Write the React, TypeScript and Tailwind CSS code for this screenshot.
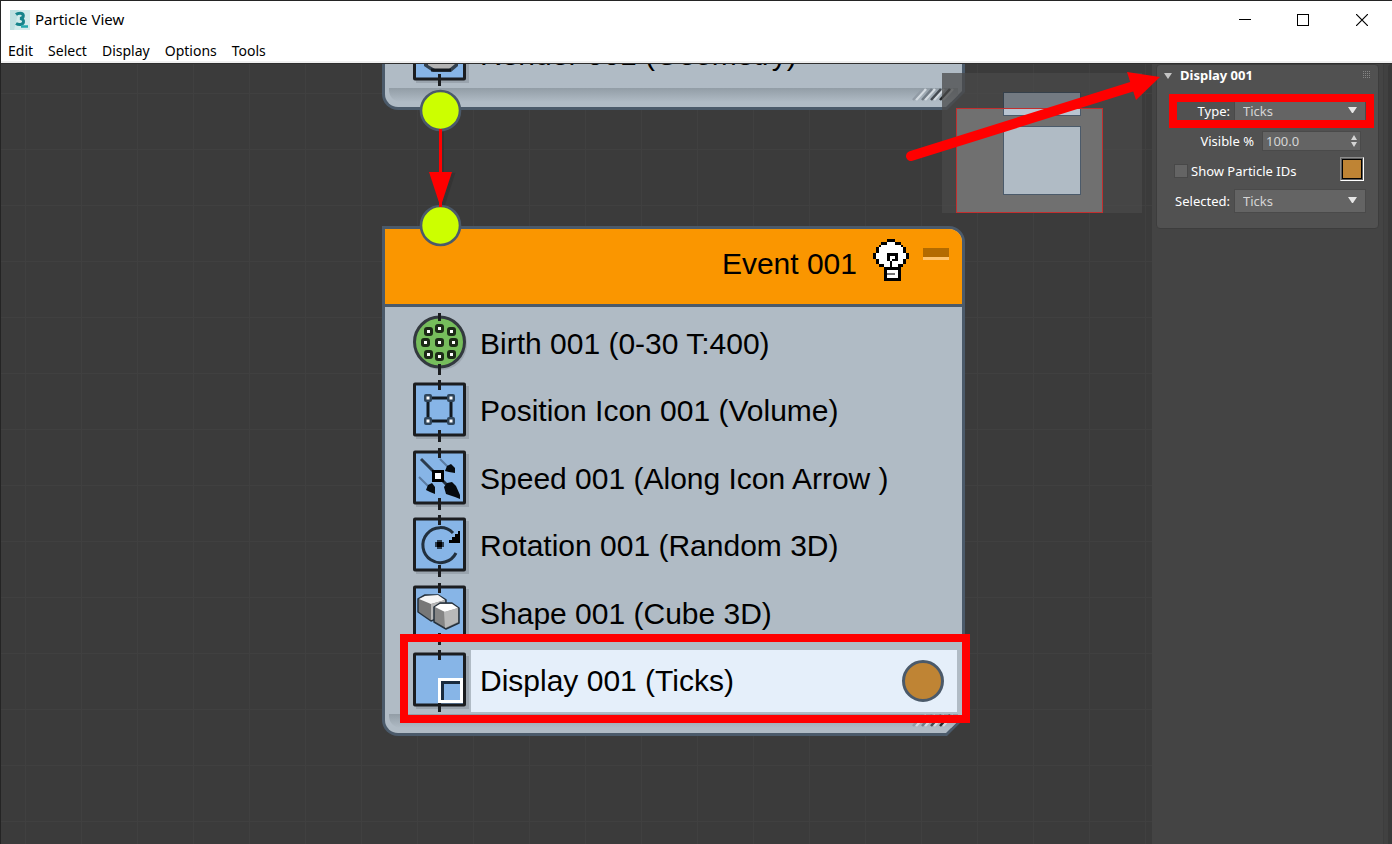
import { useState } from 'react';
import type { ReactNode } from 'react';

const MENUS = ['Edit', 'Select', 'Display', 'Options', 'Tools'];
const DISPLAY_TYPES = ['Ticks', 'Dots', 'Circles', 'Lines', 'Geometry', 'None'];

// k = outline, w = fill, g = shade
const BULB = [
  '.....kkk.....',
  '...kkwwwkk...',
  '..kwwwwwwwk..',
  '.kwwwwwwwwwk.',
  '.kwwwwwwwwwk.',
  'kwwwwkkkkwwwk',
  'kwwwwkwwkwwwk',
  '.kwwwkwkkwwk.',
  '.kwwwwkwwwwk.',
  '..kkwwkwwkk..',
  '....kkkkkk...',
  '....kwwwwk...',
  '....kgggwk...',
  '....kwwwwk...',
  '....kkkkkk...',
];

const PIXEL_COLORS: Record<string, string> = { k: '#000', w: '#fff', g: '#777' };

function BulbIcon() {
  return (
    <svg width="36" height="42" viewBox="0 0 13 15" preserveAspectRatio="none" shapeRendering="crispEdges">
      {BULB.map((row, y) =>
        row.split('').map((c, x) =>
          c === '.' ? null : (
            <rect key={`${x}-${y}`} x={x} y={y} width="1" height="1" fill={PIXEL_COLORS[c]} />
          ),
        ),
      )}
    </svg>
  );
}

// Square operator tile with the wire ticks above and below
function Tile({ children }: { children?: ReactNode }) {
  return (
    <svg className="shrink-0" width="56" height="62" viewBox="0 0 56 62">
      <rect x="3" y="6" width="53" height="53" fill="#9aa4ae" />
      <rect x="1.5" y="4" width="50" height="51" rx="0.5" fill="#87b5e7" stroke="#1b1d20" strokeWidth="3" />
      <path d="M26.5 0V10M26.5 50V62" stroke="#1b1d20" strokeWidth="3" />
      {children}
    </svg>
  );
}

const BIRTH_DOTS = [
  [15, 18], [26, 15], [38, 18],
  [12, 29], [26, 29], [40, 29],
  [15, 41], [26, 43], [38, 41],
];

function BirthIcon() {
  return (
    <svg className="shrink-0" width="56" height="62" viewBox="0 0 56 62">
      <circle cx="28" cy="31" r="26" fill="#9ca6b0" />
      <circle cx="26.5" cy="29" r="25" fill="#76bd5c" stroke="#33393f" strokeWidth="3" />
      <path d="M26.5 0V8M26.5 51V62" stroke="#1b1d20" strokeWidth="3" />
      {BIRTH_DOTS.map(([x, y]) => (
        <g key={`${x}-${y}`}>
          <rect x={x - 4} y={y - 4} width="9" height="9" rx="3" fill="#1c2a17" />
          <rect x={x - 1} y={y - 1} width="3" height="3" fill="#fff" />
        </g>
      ))}
    </svg>
  );
}

function PositionIcon() {
  return (
    <Tile>
      <rect x="15" y="18" width="23" height="23" fill="none" stroke="#11181f" strokeWidth="3" />
      {[[15, 18], [38, 18], [15, 41], [38, 41]].map(([x, y]) => (
        <g key={`${x}-${y}`}>
          <rect x={x - 4} y={y - 4} width="8" height="8" rx="2" fill="#30465c" />
          <rect x={x - 1.5} y={y - 1.5} width="3" height="3" fill="#fff" />
        </g>
      ))}
    </Tile>
  );
}

function SpeedIcon() {
  return (
    <Tile>
      <path d="M8 11L26 29" stroke="#2b3b4d" strokeWidth="3" />
      <path d="M27 11L36 20M6 29L16 39" stroke="#5b7ba0" strokeWidth="2" />
      <path d="M30 33L36 39" stroke="#222f3d" strokeWidth="3" />
      <g fill="#060a0e">
        <path d="M32 23L34 18L38 16L42 20V25L36 24Z" />
        <path d="M13 42L15 37L19 35L22 39V46L17 44Z" />
        <path d="M31 39L34 35L39 34L43 38L47 47V51L42 49L33 46Z" />
      </g>
      <rect x="20.5" y="23.5" width="9" height="9" fill="#fff" stroke="#000" strokeWidth="3" />
    </Tile>
  );
}

function RotationIcon() {
  return (
    <Tile>
      <path d="M43 38A17.5 17.5 0 1 1 40 18" fill="none" stroke="#22303e" strokeWidth="3" />
      <path d="M47 16V28H36V25H39V22H42V19H45V16Z" fill="#000" shapeRendering="crispEdges" />
      <path d="M22 29.5H31M26.5 25V34" stroke="#2b3d50" strokeWidth="5" />
      <rect x="24" y="27" width="5" height="5" fill="#000" />
    </Tile>
  );
}

function ShapeIcon() {
  return (
    <Tile>
      <g stroke="#26323e" strokeWidth="1.5" strokeLinejoin="round">
        <path d="M5 16L12 12L25 12L33 17V32L18 38L5 29Z" fill="#777" />
        <path d="M6 16L12 13L25 12L32 17L18 21Z" fill="#f6f6f6" stroke="none" />
        <path d="M18 21L32 17V32L18 37Z" fill="#b8b8b8" stroke="none" />
        <path d="M21 24L27 20L39 20L46 25V40L33 46L21 39Z" fill="#858585" />
        <path d="M22 24L27 21L39 21L45 25L32 29Z" fill="#fff" stroke="none" />
        <path d="M31 29L45 25V39L32 45Z" fill="#b9b9b9" stroke="none" />
      </g>
    </Tile>
  );
}

function DisplayIcon() {
  return (
    <Tile>
      <rect x="26.5" y="29.5" width="22" height="22" fill="#87b5e7" stroke="#fff" strokeWidth="3" />
      <path d="M29.5 50V32.5H47" fill="none" stroke="#1b2c3e" strokeWidth="3" />
    </Tile>
  );
}

function RenderIcon() {
  return (
    <Tile>
      <path d="M11 30H45V42L38 48H20L11 42Z" fill="#33404d" />
      <path d="M15 28H42V40L36 45H22L15 41Z" fill="#b4b4b4" />
      <path d="M18 46H38" stroke="#14191f" strokeWidth="3" />
    </Tile>
  );
}

interface OperatorProps {
  icon: ReactNode;
  label: string;
  selected?: boolean;
}

function Operator({ icon, label, selected }: OperatorProps) {
  return (
    <div className="flex h-[62px] gap-[2px]">
      {icon}
      <div className={`flex flex-1 items-center justify-between pl-[9px] pr-[13px] ${selected ? 'bg-[#e5effa]' : ''}`}>
        <span className="whitespace-nowrap text-[30px] leading-9">{label}</span>
        {selected && <span className="size-[42px] rounded-full border-[3px] border-[#4b5a6a] bg-[#bf8434]" />}
      </div>
    </div>
  );
}

function NodeFooter() {
  return (
    <div className="mx-1 mt-[2px] mb-[5px] flex h-[14px] justify-end rounded-bl-xl bg-linear-to-b from-[#929da6] to-[#b0bbc5]">
      <svg className="mr-1" width="42" height="14" viewBox="0 0 42 14">
        {['#929ca6', '#737d87', '#454b52', '#25282b'].map((color, i) => (
          <g key={color} strokeWidth="2.5">
            <path d={`M${4 + i * 9} 12L${14 + i * 9} 1`} stroke="#d3dae0" />
            <path d={`M${1 + i * 9} 12L${11 + i * 9} 1`} stroke={color} />
          </g>
        ))}
      </svg>
    </div>
  );
}

function EventNode({ title, className, children }: { title?: string; className: string; children: ReactNode }) {
  return (
    <section
      className={`absolute w-[583px] rounded-tr-2xl rounded-bl-2xl bg-[#4b5a6a] p-[3px] [clip-path:polygon(0_0,100%_0,100%_calc(100%-18px),calc(100%-18px)_100%,0_100%)] ${className}`}
    >
      <div className="overflow-hidden rounded-tr-[13px] rounded-bl-[13px] bg-[#b0bbc5] [clip-path:polygon(0_0,100%_0,100%_calc(100%-16px),calc(100%-16px)_100%,0_100%)]">
        {title && (
          <header className="flex h-[78px] items-start justify-end gap-[14px] border-b-[3px] border-[#4b5a6a] bg-[#fa9600] pr-[13px]">
            <h2 className="mt-[17px] mr-[2px] text-[30px] leading-9">{title}</h2>
            <button aria-label="Toggle event" className="mt-[10px]">
              <BulbIcon />
            </button>
            <button aria-label="Collapse event" className="mt-[19px] h-3 w-[26px] border-b-[3px] border-[#ffc36b] bg-[#b36b00]" />
          </header>
        )}
        <div className={`flex flex-col justify-between pt-[6px] pr-[5px] pl-7 ${title ? 'h-[405px]' : ''}`}>{children}</div>
        <NodeFooter />
      </div>
    </section>
  );
}

function Navigator() {
  return (
    <div className="absolute top-[9px] right-[10px] h-[140px] w-[200px] bg-[#4a4a4a]/75">
      <div className="absolute top-[19px] left-[61px] h-6 w-[78px] border border-[#35404b] bg-[#737a82]" />
      <div className="absolute top-[35px] left-[14px] h-[105px] w-[147px] border border-[#c22f2f] bg-[#707070]">
        <div className="absolute top-0 left-[46px] h-[7px] w-[78px] border border-t-0 border-[#4b5a6a] bg-[#b9c4d1]" />
        <div className="absolute top-[17px] left-[46px] h-[69px] w-[78px] border border-[#4b5a6a] bg-[#b0bbc5]" />
      </div>
    </div>
  );
}

function Canvas() {
  return (
    <main className="relative flex-1 overflow-hidden bg-[#3b3b3b] bg-[linear-gradient(#404040_1px,transparent_1px),linear-gradient(90deg,#404040_1px,transparent_1px)] bg-size-[56px_56px] bg-position-[24px_29px] font-['Liberation_Sans',Arial,sans-serif] text-black">
      <EventNode className="top-[-49px] left-[381px]">
        <Operator icon={<RenderIcon />} label="Render 001 (Geometry)" />
      </EventNode>

      <EventNode title="Event 001" className="top-[162px] left-[381px]">
        <Operator icon={<BirthIcon />} label="Birth 001 (0-30 T:400)" />
        <Operator icon={<PositionIcon />} label="Position Icon 001 (Volume)" />
        <Operator icon={<SpeedIcon />} label="Speed 001 (Along Icon Arrow )" />
        <Operator icon={<RotationIcon />} label="Rotation 001 (Random 3D)" />
        <Operator icon={<ShapeIcon />} label="Shape 001 (Cube 3D)" />
        <Operator icon={<DisplayIcon />} label="Display 001 (Ticks)" selected />
      </EventNode>

      {/* Wire between the two events */}
      <svg className="absolute top-6 left-[418px]" width="44" height="160" viewBox="0 0 44 160">
        <path d="M24 44V118M14 88L24 120L35 86Z" stroke="#343434" strokeWidth="2" fill="#343434" />
        <circle cx="21.5" cy="22.5" r="19.5" fill="#ccff00" stroke="#4b5a6a" strokeWidth="2.6" />
        <circle cx="21.5" cy="137.5" r="19.5" fill="#ccff00" stroke="#4b5a6a" strokeWidth="2.6" />
        <path d="M21.5 41V119" stroke="#f00" strokeWidth="3" />
        <path d="M10 84H33L21.5 119Z" fill="#f00" />
      </svg>

      <Navigator />

      <div className="pointer-events-none absolute top-[570px] left-[399px] h-[89px] w-[570px] border-8 border-[#f00]" />
    </main>
  );
}

function TypeSelect({ id, value, onChange }: { id: string; value: string; onChange: (v: string) => void }) {
  return (
    <div className="relative">
      <select
        id={id}
        value={value}
        onChange={(e) => onChange(e.target.value)}
        className="block h-6 w-[132px] appearance-none border border-[#4a4a4a] bg-[#646464] pt-px pl-2 text-[#d5d5d5]"
      >
        {DISPLAY_TYPES.map((t) => (
          <option key={t}>{t}</option>
        ))}
      </select>
      <svg className="pointer-events-none absolute top-2 right-[9px]" width="9" height="7" viewBox="0 0 9 7">
        <path d="M0 0H9L5 6H4Z" fill="#e6e6e6" />
      </svg>
    </div>
  );
}

function ParameterPanel() {
  const [type, setType] = useState('Ticks');
  const [selectedType, setSelectedType] = useState('Ticks');
  const [visible, setVisible] = useState('100.0');
  const [showIds, setShowIds] = useState(false);

  return (
    <aside className="flex w-60 shrink-0 bg-[#444444] pl-1 font-['Noto_Sans',sans-serif] text-[13px] text-white">
      <div className="relative h-[165px] w-[223px] rounded-sm border border-[#3d3d3d] bg-[#515151]">
        <button className="flex h-[22px] w-full items-center pr-[7px] pl-[7px] font-bold">
          <svg width="8" height="7" viewBox="0 0 8 7">
            <path d="M0 0H8L4 6Z" fill="#c4c4c4" />
          </svg>
          <span className="ml-2">Display 001</span>
          <svg className="mb-[2px] ml-auto" width="8" height="8" viewBox="0 0 8 8" shapeRendering="crispEdges">
            {[0, 2, 4, 6].map((y) => (
              <path key={y} d={`M0 ${y + 0.5}H8`} stroke="#858585" strokeDasharray="1 1" />
            ))}
          </svg>
        </button>

        <div className="mt-3 flex flex-col gap-[6px]">
          <div className="flex h-6 items-center gap-1">
            <label htmlFor="type" className="w-[73px] pt-[2px] text-right">Type:</label>
            <TypeSelect id="type" value={type} onChange={setType} />
          </div>

          <div className="flex h-6 items-center gap-2">
            <label htmlFor="visible" className="w-[97px] pt-[2px] text-right">Visible %</label>
            <div className="relative">
              <input
                id="visible"
                value={visible}
                onChange={(e) => setVisible(e.target.value)}
                className="block h-5 w-[99px] border border-[#4a4a4a] bg-[#646464] pl-[3px] text-[#d5d5d5]"
              />
              <svg className="pointer-events-none absolute top-1 right-1" width="6" height="12" viewBox="0 0 6 12">
                <path d="M0 5H6L3 0ZM0 7H6L3 12Z" fill="#d5d5d5" />
              </svg>
            </div>
          </div>

          <div className="flex h-6 items-center pr-[14px] pl-[17px]">
            <input
              id="ids"
              type="checkbox"
              checked={showIds}
              onChange={() => setShowIds(!showIds)}
              className="size-[14px] appearance-none border border-[#484848] bg-[#646464] checked:bg-[#d5d5d5]"
            />
            <label htmlFor="ids" className="ml-[3px] pt-[2px]">Show Particle IDs</label>
            <button
              aria-label="Display color"
              className="mb-1 ml-auto size-6 border border-t-[#8d8d8d] border-r-white border-b-white border-l-[#8d8d8d] bg-[#5e5e5e] p-px"
            >
              <span className="block size-full border border-black bg-[#bf8434]" />
            </button>
          </div>

          <div className="flex h-6 items-center gap-1">
            <label htmlFor="selected" className="w-[73px] pt-[2px] text-right">Selected:</label>
            <TypeSelect id="selected" value={selectedType} onChange={setSelectedType} />
          </div>
        </div>

        <div className="pointer-events-none absolute top-[29px] left-3 h-[34px] w-[205px] border-8 border-[#f00]" />
      </div>
      <div className="ml-auto w-[9px] border-l border-[#3d3d3d] bg-[#414141] pl-1">
        <div className="h-full rounded-tl-sm bg-[#393939]" />
      </div>
    </aside>
  );
}

function TitleBar() {
  return (
    <div className="flex h-[37px] items-center pl-[9px] text-[15px]">
      <svg width="20" height="20" viewBox="0 0 20 20">
        <rect width="20" height="20" fill="#d3ebeb" />
        <path d="M0 0H9L4 20H0Z" fill="#bfe0e1" />
        <path d="M6 4.5C8 2.8 13 2.5 13.3 5.5C13.4 7.5 12 8.4 10 8.6C12.5 8.8 13.8 10 13.5 12C13 15 8.5 15 6 13.5" fill="none" stroke="#16848b" strokeWidth="3" />
        <path d="M11 16.5H18" stroke="#22a9ac" strokeWidth="2.5" />
      </svg>
      <h1 className="ml-[5px]">Particle View</h1>
      <div className="ml-auto flex h-full">
        <button aria-label="Minimize" className="flex w-[58px] items-center justify-center">
          <svg width="12" height="12" viewBox="0 0 12 12" shapeRendering="crispEdges">
            <path d="M0 5.5H12" stroke="#000" />
          </svg>
        </button>
        <button aria-label="Maximize" className="flex w-[58px] items-center justify-center">
          <svg width="12" height="12" viewBox="0 0 12 12" shapeRendering="crispEdges">
            <rect x="0.5" y="0.5" width="11" height="11" fill="none" stroke="#000" />
          </svg>
        </button>
        <button aria-label="Close" className="flex w-[60px] items-center justify-center">
          <svg width="12" height="12" viewBox="0 0 12 12">
            <path d="M0 0L12 12M12 0L0 12" stroke="#000" strokeWidth="1.2" />
          </svg>
        </button>
      </div>
    </div>
  );
}

export default function App() {
  return (
    <div className="flex h-screen flex-col border-t border-l border-[#242424] bg-white font-['Noto_Sans',sans-serif] text-black">
      <TitleBar />
      <nav className="flex h-[25px] items-center gap-[15px] border-b-2 border-[#f0f0f0] pt-[2px] pl-[7px] text-[14px]">
        {MENUS.map((m) => (
          <button key={m}>{m}</button>
        ))}
      </nav>

      <div className="relative flex min-h-0 flex-1 border-t border-[#2f2f2f]">
        <Canvas />
        <ParameterPanel />
        {/* Pointer to the rollout */}
        <svg className="pointer-events-none absolute top-0 right-[230px]" width="260" height="104" viewBox="0 0 260 104">
          <path d="M9 92L232 22" stroke="#f00" strokeWidth="10" strokeLinecap="round" />
          <path d="M225 8L258 13L234 36Z" fill="#f00" />
        </svg>
      </div>
    </div>
  );
}
